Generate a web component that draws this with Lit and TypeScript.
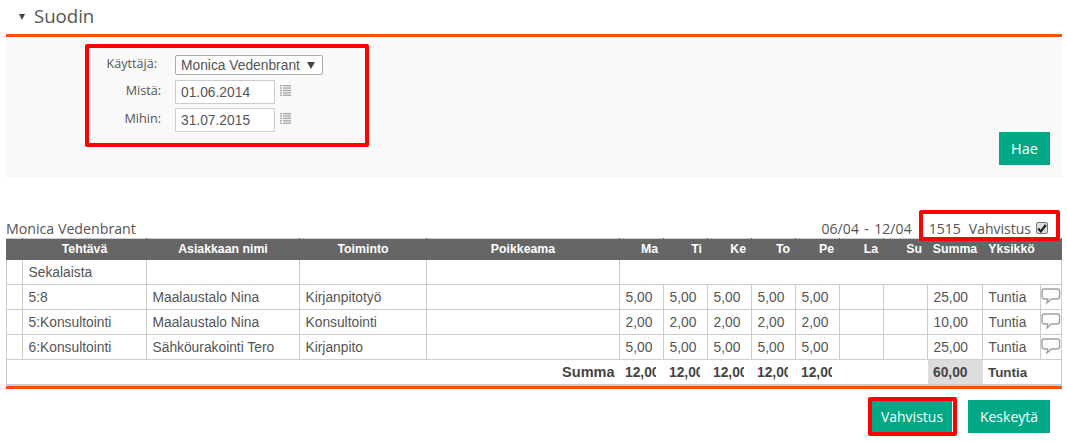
import { LitElement, html, css } from "lit";
import { customElement } from "lit/decorators.js";

const listIcon = html`<svg class="listicon" width="11" height="11" viewBox="0 0 11 11"><g fill="#a4a4a4"><rect x="0" y="0" width="2" height="1.3"/><rect x="3" y="0" width="8" height="1.3"/><rect x="0" y="2.4" width="2" height="1.3"/><rect x="3" y="2.4" width="8" height="1.3"/><rect x="0" y="4.8" width="2" height="1.3"/><rect x="3" y="4.8" width="8" height="1.3"/><rect x="0" y="7.2" width="2" height="1.3"/><rect x="3" y="7.2" width="8" height="1.3"/><rect x="0" y="9.6" width="2" height="1.3"/><rect x="3" y="9.6" width="8" height="1.3"/></g></svg>`;

const bubble = html`<svg width="20" height="17" viewBox="0 0 20 17"><path d="M3 1H16.5Q18.6 1 18.6 3.2V8.2Q18.6 11 16 11H10.5L6 14.8L6.8 11H3.5Q1 11 1 8.2V3.2Q1 1 3 1Z" fill="#fff" stroke="#a0a0a0" stroke-width="1.4"/></svg>`;

const rows = [
  ["5:8", "Maalaustalo Nina", "Kirjanpitotyö", "5,00", "25,00"],
  ["5:Konsultointi", "Maalaustalo Nina", "Konsultointi", "2,00", "10,00"],
  ["6:Konsultointi", "Sähköurakointi Tero", "Kirjanpito", "5,00", "25,00"],
];
const widths = [16, 124, 153, 127, 193, 44, 44, 44, 44, 44, 44, 44, 55, 58, 21];

@customElement("app-root")
export class AppRoot extends LitElement {
  static styles = css`
    :host { display: block; width: 1067px; height: 442px; position: relative; overflow: hidden; background: #fff; font-family: "Liberation Sans", Arial, sans-serif; color: #444; }
    .title { height: 34px; display: flex; align-items: center; gap: 9px; padding-left: 19px; font-family: "Open Sans", sans-serif; font-size: 18.6px; color: #555; box-sizing: border-box; padding-bottom: 3px; }
    .caret { width: 0; height: 0; border-left: 3.5px solid transparent; border-right: 3.5px solid transparent; border-top: 6px solid #444; margin-top: 2px; }
    .panel { margin: 0 5px 0 6px; height: 144px; box-sizing: border-box; border-top: 3px solid #ff4e00; background: #f9f9f9; position: relative; display: flex; justify-content: space-between; align-items: flex-end; padding: 18px 12px 13px 0; }
    .form { align-self: flex-start; display: grid; grid-template-columns: 155px 100px auto; column-gap: 14px; row-gap: 4px; align-items: center; }
    .form label { text-align: right; color: #555; font-family: "Open Sans", sans-serif; font-size: 12.6px; margin-top: -4px; }
    .form .l1 { margin-top: -4px; margin-right: 4px; }
    .select { width: 148px; height: 20px; margin-bottom: 1px; box-sizing: border-box; border: 1px solid #aaa; border-radius: 2px; background: #fff; font-size: 13.8px; color: #555; display: flex; align-items: center; padding-left: 5px; gap: 7px; white-space: nowrap; }
    .select i { width: 0; height: 0; border-left: 4px solid transparent; border-right: 4px solid transparent; border-top: 7px solid #444; }
    .input { width: 100px; height: 24px; box-sizing: border-box; border: 1px solid #ccc; background: #fff; font-size: 13.8px; color: #555; padding-left: 5px; display: flex; align-items: center; }
    .listicon { margin-left: -9px; margin-top: -3px; }
    .btn { background: #00a885; color: #fff; font-family: "Open Sans", sans-serif; font-size: 14px; display: flex; align-items: center; justify-content: center; height: 33px; }
    .hae { width: 51px; font-size: 14.5px; }
    .meta { margin: 41px 5px 1px 6px; height: 18px; display: flex; align-items: center; font-family: "Open Sans", sans-serif; font-size: 14px; color: #555; }
    .meta .name { font-size: 14.2px; }
    .meta .date { margin-left: auto; word-spacing: 1.5px; letter-spacing: 0.1px; }
    .meta .num { margin-left: 17px; margin-right: -1px; }
    .meta .conf { margin-left: 9px; }
    .check { width: 12px; height: 12px; margin-left: 5px; margin-right: 14px; box-sizing: border-box; background: #ddd; border: 1px solid #777; border-radius: 2px; display: flex; align-items: center; justify-content: center; }
    table { margin-left: 6px; width: 1056px; table-layout: fixed; border-collapse: collapse; font-size: 13.8px; border: 1px solid #ccc; border-bottom: 2px solid #ccc; }
    th { background: #666; color: #fff; height: 20px; padding: 0; font-size: 12.3px; font-weight: bold; border: 1px solid #666; border-top-color: #ccc; text-align: center; white-space: nowrap; }
    th.r { text-align: right; padding-right: 5px; }
    td { height: 24px; padding: 0 0 0 5.5px; border: 1px solid #ccc; overflow: hidden; white-space: nowrap; color: #555; }
    td.ic { padding: 0; vertical-align: top; }
    td.ic svg { display: block; margin: 3px 0 0 0; }
    tr.tot td { border-left: none; border-right: none; font-weight: bold; color: #444; }
    tr.tot td.lab { text-align: right; padding-right: 5px; font-size: 14.5px; }
    tr.tot td.sum { background: #ddd; }
    tr.tot .clip { display: inline-block; width: 31px; overflow: hidden; vertical-align: bottom; }
    tr.tot .unit { font-size: 13.4px; }
    .bar { margin: 0 5px 0 6px; height: 3px; background: #ff4e00; }
    .foot { display: flex; justify-content: flex-end; gap: 16px; padding: 11px 17px 0 0; }
    .foot .v { width: 80px; }
    .foot .k { width: 82px; }
    .mark { position: absolute; box-sizing: border-box; border: 4px solid #f00; border-radius: 2px; pointer-events: none; }
    .m1 { left: 85px; top: 44px; width: 284px; height: 103px; }
    .m2 { left: 919px; top: 210px; width: 141px; height: 31px; }
    .m3 { left: 868px; top: 397px; width: 89px; height: 39px; }
  `;

  render() {
    return html`
      <div class="title"><span class="caret"></span><span>Suodin</span></div>
      <div class="panel">
        <div class="form">
          <label class="l1">Käyttäjä:</label>
          <div class="select">Monica Vedenbrant <i></i></div><span></span>
          <label>Mistä:</label>
          <div class="input">01.06.2014</div>${listIcon}
          <label>Mihin:</label>
          <div class="input">31.07.2015</div>${listIcon}
        </div>
        <div class="btn hae">Hae</div>
      </div>
      <div class="meta">
        <span class="name">Monica Vedenbrant</span>
        <span class="date">06/04 - 12/04</span>
        <span class="num">1515</span>
        <span class="conf">Vahvistus</span>
        <span class="check"><svg width="10" height="9" viewBox="0 0 10 9"><path d="M1.2 4.6L3.8 7.4L8.8 1" fill="none" stroke="#222" stroke-width="2.2"/></svg></span>
      </div>
      <table>
        <colgroup>${widths.map((w) => html`<col style="width:${w}px" />`)}</colgroup>
        <thead><tr>
          <th></th><th>Tehtävä</th><th>Asiakkaan nimi</th><th>Toiminto</th><th>Poikkeama</th>
          ${["Ma", "Ti", "Ke", "To", "Pe", "La", "Su"].map((d) => html`<th class="r">${d}</th>`)}
          <th>Summa</th><th>Yksikkö</th><th></th>
        </tr></thead>
        <tbody>
          <tr><td></td><td>Sekalaista</td><td></td><td></td><td></td><td colspan="10"></td></tr>
          ${rows.map((r) => html`<tr>
            <td></td><td>${r[0]}</td><td>${r[1]}</td><td>${r[2]}</td><td></td>
            ${[0, 1, 2, 3, 4].map(() => html`<td>${r[3]}</td>`)}<td></td><td></td>
            <td>${r[4]}</td><td>Tuntia</td><td class="ic">${bubble}</td>
          </tr>`)}
          <tr class="tot">
            <td class="lab" colspan="5">Summa</td>
            ${[0, 1, 2, 3, 4].map(() => html`<td><span class="clip">12,00</span></td>`)}<td></td><td></td>
            <td class="sum">60,00</td><td class="unit">Tuntia</td><td></td>
          </tr>
        </tbody>
      </table>
      <div class="bar"></div>
      <div class="foot"><div class="btn v">Vahvistus</div><div class="btn k">Keskeytä</div></div>
      <div class="mark m1"></div>
      <div class="mark m2"></div>
      <div class="mark m3"></div>
    `;
  }
}
